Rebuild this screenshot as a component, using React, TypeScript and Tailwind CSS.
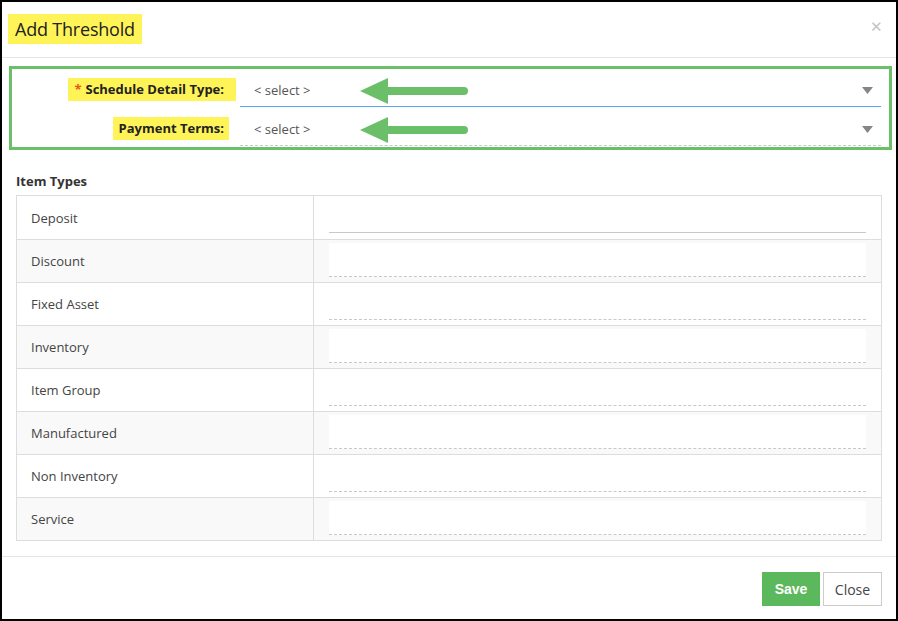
const itemTypes = [
	"Deposit",
	"Discount",
	"Fixed Asset",
	"Inventory",
	"Item Group",
	"Manufactured",
	"Non Inventory",
	"Service",
];

const Arrow = () => (
	<svg width="110" height="26" viewBox="0 0 110 26" className="shrink-0">
		<path d="M0 13 L28 0 L28 26 Z" fill="#6cbf69" />
		<line x1="24" y1="13" x2="104" y2="13" stroke="#6cbf69" strokeWidth="8" strokeLinecap="round" />
	</svg>
);

const Caret = () => (
	<svg width="11" height="7" viewBox="0 0 11 7">
		<path d="M0 0 H11 L5.5 7 Z" fill="#858585" />
	</svg>
);

interface SelectRowProps {
	label: string;
	required?: boolean;
	focused?: boolean;
	labelPad: string;
	labelBox: string;
}

const SelectRow = ({ label, required, focused, labelPad, labelBox }: SelectRowProps) => {
	return (
		<div className="flex h-[35px] items-stretch">
			<div className={`w-[228px] flex items-center justify-end ${labelBox}`}>
				<span className={`bg-[#fff457] py-[2px] pl-[6px] ${labelPad} font-bold text-[13px] text-[#222]`}>
					{required && <span className="text-[#e8531d] mr-[4px]">*</span>}
					{label}
				</span>
			</div>
			<div
				className={`flex-1 mr-[8px] flex items-center pt-[3px] pl-[14px] pr-[8px] text-[13px] text-[#555] ${
					focused ? "border-b border-[#5aa6e8]" : "border-b border-dashed border-[#c8c8c8]"
				}`}
			>
				<span className="w-[106px]">&lt; select &gt;</span>
				<Arrow />
				<span className="flex-1" />
				<Caret />
			</div>
		</div>
	);
};

export default function App() {
	return (
		<div
			className="w-[898px] h-[621px] border-2 border-black bg-white flex flex-col text-[#333]"
			style={{ fontFamily: '"Open Sans", "Noto Sans", sans-serif' }}
		>
			{/* header */}
			<div className="h-[56px] shrink-0 border-b border-[#e5e5e5] flex items-start justify-between pl-[6px] pr-[13px] pt-[12px]">
				<div className="bg-[#fff457] h-[30px] px-[7px] flex items-center text-[18px] text-[#222] tracking-[-0.2px]">
					Add Threshold
				</div>
				<span className="text-[#c4c4c4] text-[15px] leading-none mt-[5px]">✕</span>
			</div>

			{/* body */}
			<div className="flex-1 flex flex-col">
				<div className="mt-[8px] ml-[7px] mr-[4px] border-[3px] border-[#6cbf69] pt-[3px] pb-[1px] flex flex-col gap-[4px]">
					<SelectRow label="Schedule Detail Type:" required focused labelPad="pr-[12px]" labelBox="pr-[4px]" />
					<SelectRow label="Payment Terms:" labelPad="pr-[5px]" labelBox="pr-[11px]" />
				</div>

				<div className="ml-[14px] mt-[21px] mb-[4px] text-[13px] font-bold text-[#333] leading-[20px]">
					Item Types
				</div>

				<div className="ml-[14px] mr-[14px] border border-[#dddddd]">
					{itemTypes.map((name, i) => (
						<div
							key={name}
							className={`flex h-[43px] ${i > 0 ? "border-t border-[#dddddd]" : "h-[42px]"} ${
								i % 2 === 1 ? "bg-[#f9f9f9]" : "bg-white"
							}`}
						>
							<div className="w-[297px] border-r border-[#dddddd] flex items-center pl-[14px] pt-[2px] text-[13px] text-[#444]">
								{name}
							</div>
							<div className="flex-1 pl-[15px] pr-[15px] pt-[3px]">
								<div
									className={`h-[34px] ${
										i === 0
											? "border-b border-[#c8c8c8]"
											: "bg-white border-b border-dashed border-[#c8c8c8]"
									}`}
								/>
							</div>
						</div>
					))}
				</div>
			</div>

			{/* footer */}
			<div className="h-[63px] shrink-0 border-t border-[#e5e5e5] flex items-start justify-end gap-[3px] pr-[14px] pt-[15px]">
				<button
					className="h-[34px] w-[58px] bg-[#5cb85c] text-white text-[14px] font-bold"
					style={{ fontFamily: '"Liberation Sans", Arial, sans-serif' }}
				>
					Save
				</button>
				<button className="h-[34px] w-[59px] bg-white border border-[#cccccc] text-[#444] text-[14px]">
					Close
				</button>
			</div>
		</div>
	);
}
